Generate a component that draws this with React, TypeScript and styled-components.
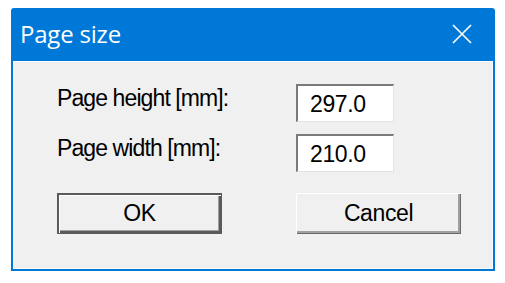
import * as React from "react";
import styled, { createGlobalStyle } from "styled-components";

const GlobalStyle = createGlobalStyle`
  html, body {
    margin: 0;
    padding: 0;
    background: #ffffff;
  }
`;

const SWindow = styled.div`
  margin: 8px 0 0 11px;
  width: 484px;
  height: 263px;
  display: flex;
  flex-direction: column;
  background: #0078d7;
  border-radius: 3px 3px 0 0;
  box-sizing: border-box;
`;

const STitleBar = styled.div`
  height: 53px;
  display: flex;
  align-items: center;
  justify-content: space-between;
  padding: 0 23px 2px 9px;
  box-sizing: border-box;
  color: #ffffff;
  font-family: "Open Sans", "Noto Sans", sans-serif;
  font-size: 24px;
  letter-spacing: -0.2px;
`;

const SClose = styled.svg`
  width: 20px;
  height: 20px;
`;

const SClient = styled.div`
  flex: 1;
  margin: 0 2px 2px 2px;
  background: #f0f0f0;
  border: 1px solid #fbfbfb;
  padding: 22px 0 0 43px;
  font-family: "Liberation Sans", Arial, sans-serif;
  font-size: 23px;
  letter-spacing: -0.4px;
  color: #000000;
`;

const SFields = styled.div`
  display: grid;
  grid-template-columns: 239px 98px;
  row-gap: 12px;
  align-items: start;
`;

const SLabel = styled.label`
  line-height: 26px;
  padding-top: 1px;
  letter-spacing: -0.9px;
`;

const SInput = styled.div`
  height: 38px;
  box-sizing: border-box;
  background: #ffffff;
  border-top: 2px solid #7a7a7a;
  border-left: 2px solid #7a7a7a;
  border-right: 1px solid #e3e3e3;
  border-bottom: 1px solid #e3e3e3;
  padding: 5px 0 0 12px;
  line-height: 26px;
`;

const SButtons = styled.div`
  display: flex;
  gap: 74px;
  margin-top: 21px;
`;

const SButton = styled.button<{ $default?: boolean }>`
  width: 165px;
  height: 41px;
  background: #f0f0f0;
  font: inherit;
  letter-spacing: inherit;
  color: #000000;
  padding: 0;
  border: ${(p) => (p.$default ? "1px solid #5a5a5a" : "none")};
  box-shadow: ${(p) =>
    p.$default
      ? "inset 1px 1px #5a5a5a, inset 2px 2px #ffffff, inset -2px -2px #5a5a5a, inset -3px -3px #a0a0a0"
      : "inset 1px 1px #ffffff, inset -1px -1px #696969, inset -3px -3px #a0a0a0"};
`;

const App = () => {
  return (
    <>
      <GlobalStyle />
      <SWindow>
        <STitleBar>
          <span>Page size</span>
          <SClose viewBox="0 0 20 20">
            <path d="M1 1 L19 19 M19 1 L1 19" stroke="#ffffff" strokeWidth="1.7" fill="none" />
          </SClose>
        </STitleBar>
        <SClient>
          <SFields>
            <SLabel>Page height [mm]:</SLabel>
            <SInput>297.0</SInput>
            <SLabel>Page width [mm]:</SLabel>
            <SInput>210.0</SInput>
          </SFields>
          <SButtons>
            <SButton $default>OK</SButton>
            <SButton>Cancel</SButton>
          </SButtons>
        </SClient>
      </SWindow>
    </>
  );
};

export default App;
